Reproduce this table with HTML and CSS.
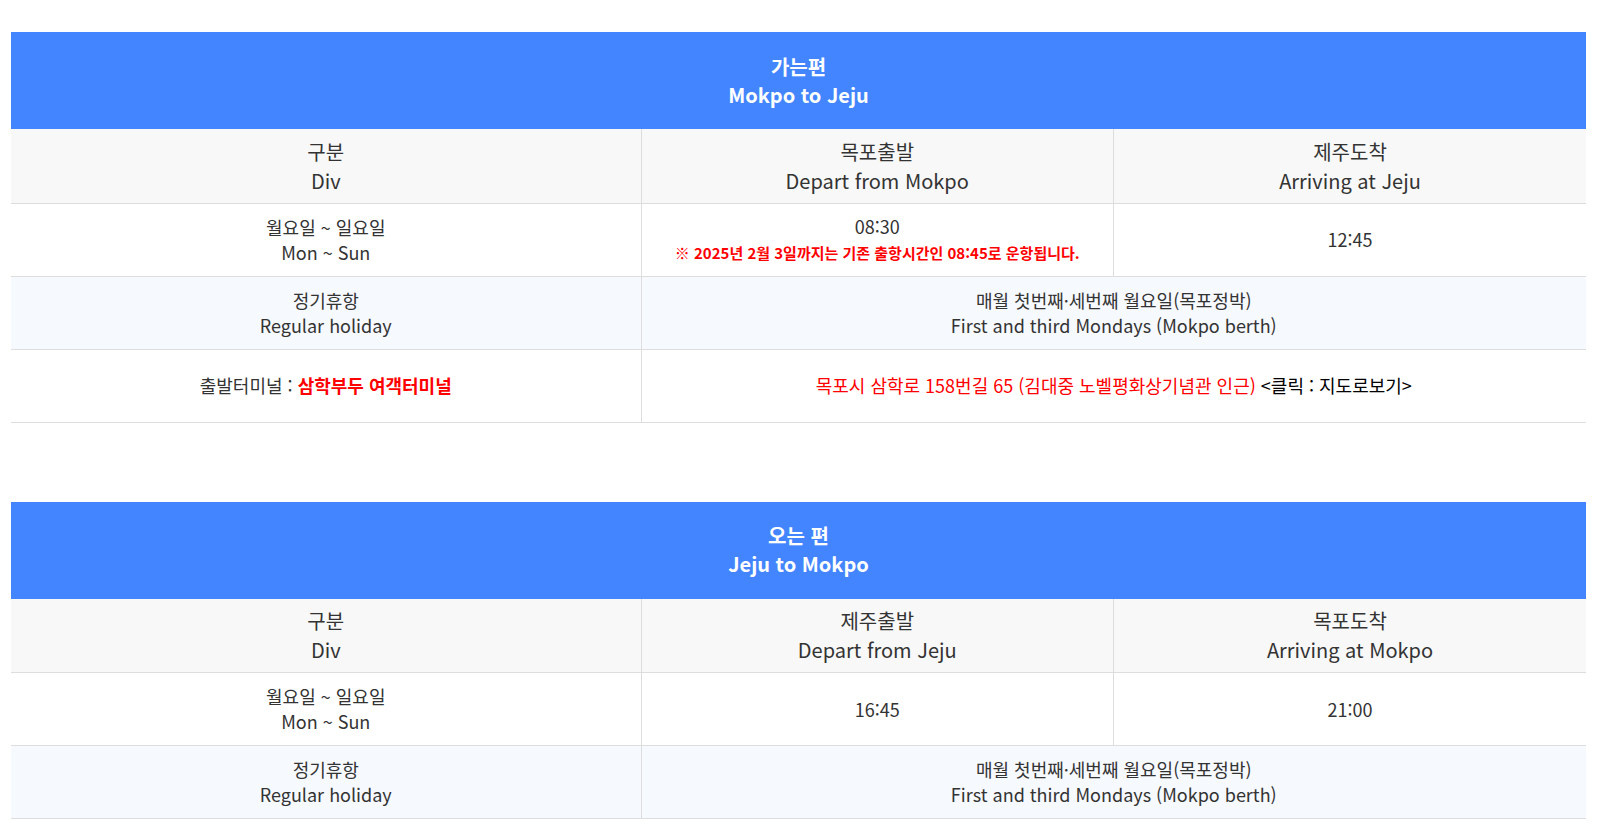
FILE: index.html
```html
<!DOCTYPE html>
<html lang="ko">
<head>
<meta charset="utf-8">
<link rel="stylesheet" href="styles.css">
</head>
<body>
<div class="page">
  <table class="sched">
    <colgroup><col class="c1"><col class="c2"><col class="c3"></colgroup>
    <thead>
      <tr><th colspan="3" class="title">가는편<br>Mokpo to Jeju</th></tr>
      <tr class="head"><td>구분<br>Div</td><td>목포출발<br>Depart from Mokpo</td><td>제주도착<br>Arriving at Jeju</td></tr>
    </thead>
    <tbody>
      <tr><td>월요일 ~ 일요일<br>Mon ~ Sun</td><td>08:30<br><span class="note">※ 2025년 2월 3일까지는 기존 출항시간인 08:45로 운항됩니다.</span></td><td>12:45</td></tr>
      <tr class="alt"><td>정기휴항<br>Regular holiday</td><td colspan="2">매월 첫번째·세번째 월요일(목포정박)<br>First and third Mondays (Mokpo berth)</td></tr>
      <tr><td>출발터미널 : <b class="red">삼학부두 여객터미널</b></td><td colspan="2"><span class="redn">목포시 삼학로 158번길 65 (김대중 노벨평화상기념관 인근)</span> <a class="map">&lt;클릭 : 지도로보기&gt;</a></td></tr>
    </tbody>
  </table>

  <table class="sched">
    <colgroup><col class="c1"><col class="c2"><col class="c3"></colgroup>
    <thead>
      <tr><th colspan="3" class="title">오는 편<br>Jeju to Mokpo</th></tr>
      <tr class="head"><td>구분<br>Div</td><td>제주출발<br>Depart from Jeju</td><td>목포도착<br>Arriving at Mokpo</td></tr>
    </thead>
    <tbody>
      <tr><td>월요일 ~ 일요일<br>Mon ~ Sun</td><td>16:45</td><td>21:00</td></tr>
      <tr class="alt"><td>정기휴항<br>Regular holiday</td><td colspan="2">매월 첫번째·세번째 월요일(목포정박)<br>First and third Mondays (Mokpo berth)</td></tr>
    </tbody>
  </table>
</div>
</body>
</html>
```

FILE: styles.css
```css
html, body {
  margin: 0;
  padding: 0;
  background: #fff;
}
.page {
  padding: 32px 11px 0;
  font-family: "Noto Sans CJK KR", "Noto Sans", sans-serif;
  color: #333;
}
.sched {
  width: 100%;
  border-collapse: collapse;
  table-layout: fixed;
  margin-bottom: 79px;
}
.c1 { width: 40%; }
.c2 { width: 30%; }
.c3 { width: 30%; }
.title {
  background: #4285ff;
  color: #fff;
  font-size: 20px;
  font-weight: 700;
  line-height: 28px;
  height: 97px;
  padding: 0;
  box-sizing: border-box;
  text-align: center;
}
.sched td {
  text-align: center;
  vertical-align: middle;
  border-bottom: 1px solid #ddd;
  padding: 0 4px;
  font-size: 18px;
  line-height: 25px;
  height: 73px;
  box-sizing: border-box;
}
.sched td + td {
  border-left: 1px solid #ddd;
}
.head td {
  background: #f8f8f8;
  font-size: 20px;
  line-height: 29px;
  height: 74px;
}
.alt td {
  background: #f6f9fe;
}
.note {
  color: #f00;
  font-weight: 700;
  font-size: 15px;
}
.red {
  color: #f00;
  font-weight: 700;
}
.redn {
  color: #f00;
}
.map {
  color: #000;
  cursor: pointer;
}
```
